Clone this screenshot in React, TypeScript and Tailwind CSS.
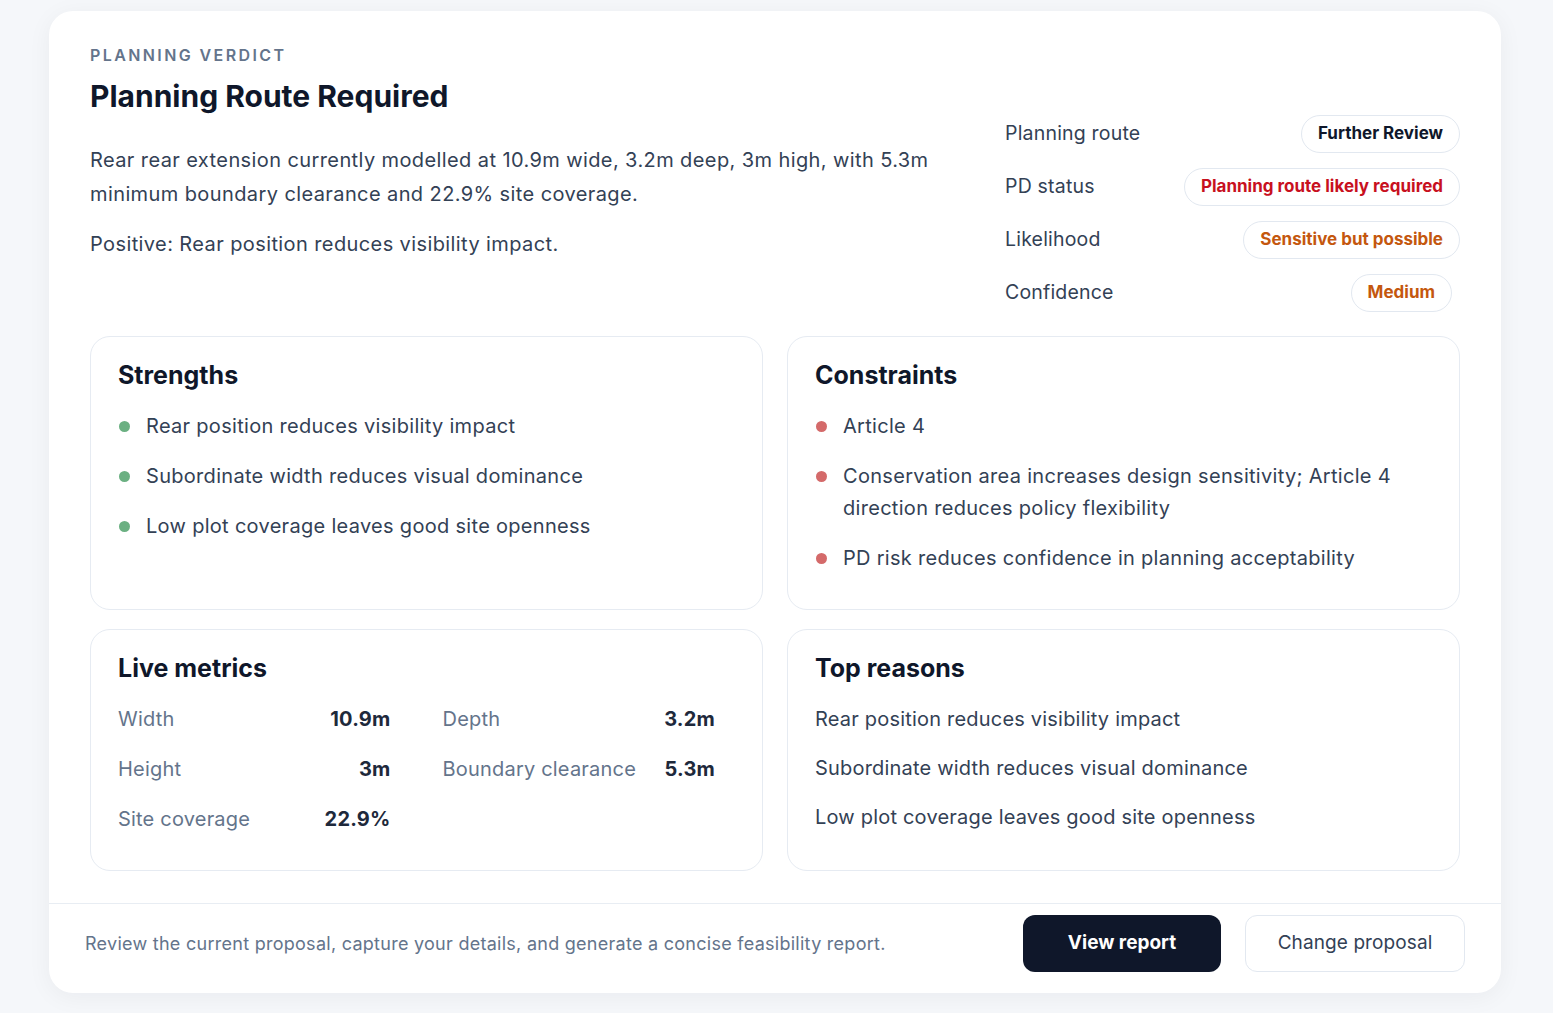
import React from 'react';

interface Row {
  label: string;
  value: string;
  tone: string;
  extra?: string;
}

const verdictRows: Row[] = [
  { label: 'Planning route', value: 'Further Review', tone: 'text-slate-900' },
  { label: 'PD status', value: 'Planning route likely required', tone: 'text-[#c8101e]' },
  { label: 'Likelihood', value: 'Sensitive but possible', tone: 'text-[#c4570e]' },
  { label: 'Confidence', value: 'Medium', tone: 'text-[#c4570e]', extra: 'mr-2' },
];

const strengths = [
  'Rear position reduces visibility impact',
  'Subordinate width reduces visual dominance',
  'Low plot coverage leaves good site openness',
];

const constraints = [
  'Article 4',
  'Conservation area increases design sensitivity; Article 4 direction reduces policy flexibility',
  'PD risk reduces confidence in planning acceptability',
];

const metrics = [
  { label: 'Width', value: '10.9m' },
  { label: 'Depth', value: '3.2m' },
  { label: 'Height', value: '3m' },
  { label: 'Boundary clearance', value: '5.3m' },
  { label: 'Site coverage', value: '22.9%' },
];

const Panel: React.FC<{ title: string; children: React.ReactNode }> = ({ title, children }) => (
  <section className="rounded-[20px] border border-[#e6ebf2] bg-white px-[26px] pt-[23px] pb-[35px]">
    <h3 className="ml-px text-[25px] leading-[30px] font-bold text-[#0f172a]">{title}</h3>
    <div className="mt-5">{children}</div>
  </section>
);

const BulletList: React.FC<{ items: string[]; dot: string }> = ({ items, dot }) => (
  <ul className="flex flex-col gap-[18px]">
    {items.map((item) => (
      <li key={item} className="flex items-start gap-[16px] text-[20px] leading-[32px] tracking-[0.015em] text-[#334155]">
        <span className={`mt-[11px] ml-[2px] h-[11px] w-[11px] shrink-0 rounded-full ${dot}`} />
        <span>{item}</span>
      </li>
    ))}
  </ul>
);

export default function App() {
  return (
    <div className="min-h-screen bg-[#f5f7fa] pt-[11px] pb-[21px]" style={{ fontFamily: 'Inter, "Noto Sans", sans-serif' }}>
      <div className="ml-[49px] w-[1452px] rounded-[24px] bg-white shadow-[0_4px_24px_rgba(15,23,42,0.05)]">
        <div className="px-[41px] pt-[32px] pb-[32px]">
          <div className="flex items-start justify-between">
            <div className="w-[860px]">
              <div className="text-[16px] leading-[24px] font-semibold uppercase tracking-[0.15em] text-[#64748b]">
                Planning verdict
              </div>
              <h1 className="mt-[11px] text-[30px] leading-[36px] font-bold text-[#0f172a]">
                Planning Route Required
              </h1>
              <p className="mt-[29px] text-[20px] leading-[34px] tracking-[0.02em] text-[#334155]">
                Rear rear extension currently modelled at 10.9m wide, 3.2m deep, 3m high, with 5.3m minimum boundary
                clearance and 22.9% site coverage.
              </p>
              <p className="mt-4 text-[20px] leading-[34px] tracking-[0.02em] text-[#334155]">
                Positive: Rear position reduces visibility impact.
              </p>
            </div>
            <div className="mt-[72px] flex w-[455px] flex-col gap-[15px]">
              {verdictRows.map((row) => (
                <div key={row.label} className="flex h-[38px] items-center justify-between">
                  <span className="text-[19.5px] tracking-[0.01em] text-[#334155]">{row.label}</span>
                  <span
                    className={`flex h-[38px] items-center rounded-full border border-[#e2e8f0] px-[16px] text-[17px] font-bold ${row.tone} ${row.extra ?? ''}`}
                  >
                    {row.value}
                  </span>
                </div>
              ))}
            </div>
          </div>

          <div className="mt-6 grid grid-cols-2 gap-x-6 gap-y-[19px]">
            <Panel title="Strengths">
              <BulletList items={strengths} dot="bg-[#6bb082]" />
            </Panel>
            <Panel title="Constraints">
              <BulletList items={constraints} dot="bg-[#d46a6a]" />
            </Panel>
            <Panel title="Live metrics">
              <div className="ml-px grid w-[597px] grid-cols-2 gap-x-[52px] gap-y-[18px]">
                {metrics.map((m) => (
                  <div key={m.label} className="flex items-center justify-between text-[20px] leading-[32px] tracking-[0.01em]">
                    <span className="text-[#64748b]">{m.label}</span>
                    <span className="font-bold text-[#1e293b]">{m.value}</span>
                  </div>
                ))}
              </div>
            </Panel>
            <Panel title="Top reasons">
              <div className="ml-px flex flex-col gap-[17px]">
                {strengths.map((r) => (
                  <p key={r} className="text-[20px] leading-[32px] tracking-[0.01em] text-[#334155]">
                    {r}
                  </p>
                ))}
              </div>
            </Panel>
          </div>
        </div>

        <div className="flex items-center justify-between border-t border-[#e8edf3] px-[36px] pt-[11px] pb-[21px]">
          <p className="text-[18px] tracking-[0.015em] text-[#64748b]">
            Review the current proposal, capture your details, and generate a concise feasibility report.
          </p>
          <div className="flex items-center gap-6">
            <button className="h-[57px] w-[198px] rounded-[12px] bg-[#0f172a] text-[19px] font-bold text-white">
              View report
            </button>
            <button className="h-[57px] w-[220px] rounded-[12px] border border-[#e2e8f0] bg-white text-[19px] tracking-[0.005em] text-[#334155]">
              Change proposal
            </button>
          </div>
        </div>
      </div>
    </div>
  );
}
